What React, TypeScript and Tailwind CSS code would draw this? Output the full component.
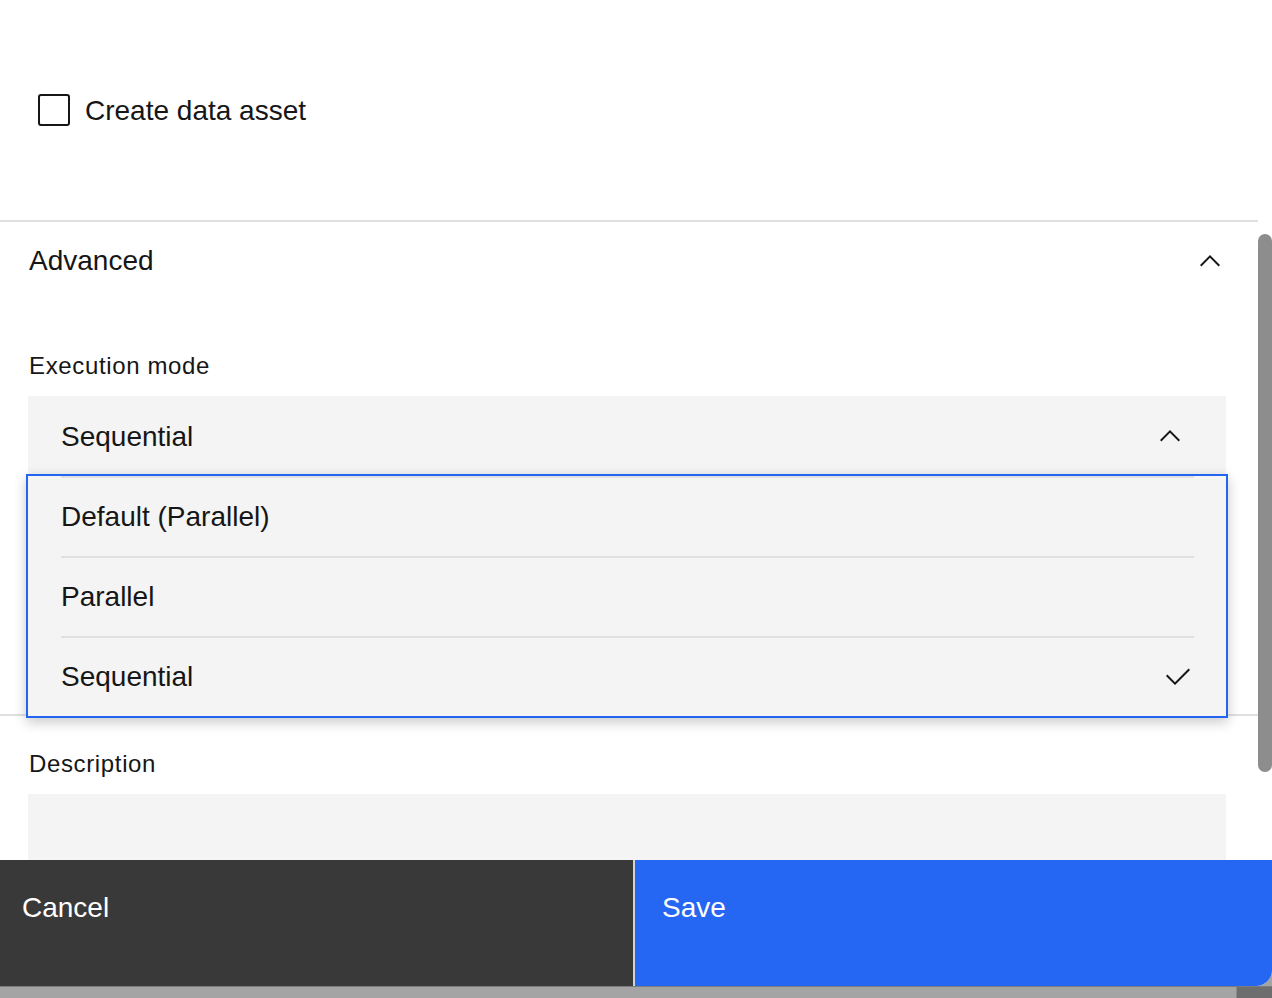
import React from 'react';

const ChevronUp: React.FC<{ className?: string }> = ({ className }) => (
    <svg className={className} viewBox="0 0 32 32" fill="currentColor">
        <path d="M16 10L26 20 24.6 21.4 16 12.8 7.4 21.4 6 20 16 10z" />
    </svg>
);

const Checkmark: React.FC<{ className?: string }> = ({ className }) => (
    <svg className={className} viewBox="0 0 32 32" fill="currentColor">
        <path d="M13 24L4 15 5.414 13.586 13 21.171 26.586 7.586 28 9 13 24z" />
    </svg>
);

const options = ['Default (Parallel)', 'Parallel', 'Sequential'];

const App: React.FC = () => {
    const selected = 'Sequential';

    return (
        <div className="w-[1272px] h-[998px] overflow-hidden bg-[#a4a4a4] text-[#161616] font-['Liberation_Sans',Arial,sans-serif]">
            <div className="h-[986px] flex flex-col bg-white rounded-br-[16px] overflow-hidden">
                <div className="flex flex-1 min-h-0">
                    {/* Main column */}
                    <div className="w-[1258px] flex flex-col">
                        <div className="h-[220px] pt-[94px] pl-[38px]">
                            <label className="flex items-start gap-[15px]">
                                <span className="w-[32px] h-[32px] border-2 border-[#161616] rounded-[3px]" />
                                <span className="text-[28px] leading-[32px] mt-[1px]">Create data asset</span>
                            </label>
                        </div>

                        {/* Accordion */}
                        <div className="border-t-2 border-b-2 border-[#e0e0e0]">
                            <div className="h-[78px] flex items-center justify-between pl-[29px] pr-[32px]">
                                <span className="text-[28px] leading-[36px]">Advanced</span>
                                <ChevronUp className="w-[32px] h-[32px]" />
                            </div>
                            <div className="pl-[28px] pr-[32px] pt-[50px] pb-[240px]">
                                <div className="pl-[1px] text-[24px] leading-[32px] tracking-[0.64px] mb-[14px]">Execution mode</div>
                                <div className="relative">
                                    <div className="h-[78px] bg-[#f4f4f4] flex items-center justify-between pl-[33px] pr-[40px]">
                                        <span className="text-[28px] leading-[36px] pt-[3px]">{selected}</span>
                                        <ChevronUp className="w-[32px] h-[32px] mt-[2px]" />
                                    </div>
                                    <div className="absolute top-full left-[-2px] right-[-2px] z-10 border-2 border-[#2464f2] bg-[#f4f4f4] shadow-[0_4px_12px_rgba(0,0,0,0.22)]">
                                        {options.map((opt) => (
                                            <div key={opt} className="pl-[33px] pr-[32px]">
                                                <div className="h-[80px] border-t-2 border-[#e0e0e0] flex items-center justify-between">
                                                    <span className="text-[28px] leading-[36px]">{opt}</span>
                                                    {opt === selected && <Checkmark className="w-[32px] h-[32px]" />}
                                                </div>
                                            </div>
                                        ))}
                                    </div>
                                </div>
                            </div>
                        </div>

                        <div className="flex-1 min-h-0 flex flex-col pl-[28px] pr-[32px] pt-[32px]">
                            <div className="pl-[1px] text-[24px] leading-[32px] tracking-[0.64px] mb-[14px]">Description</div>
                            <div className="flex-1 bg-[#f4f4f4]" />
                        </div>
                    </div>

                    {/* Scrollbar */}
                    <div className="w-[14px] pt-[234px]">
                        <div className="h-[538px] rounded-full bg-[#8d8d8d]" />
                    </div>
                </div>

                {/* Footer buttons */}
                <div className="h-[126px] flex bg-[#d4d4d4] gap-[2px]">
                    <button className="w-[633px] bg-[#393939] text-white text-left pl-[22px] pt-[30px] flex items-start">
                        <span className="text-[28px] leading-[36px]">Cancel</span>
                    </button>
                    <button className="flex-1 bg-[#2566f2] text-white text-left pl-[27px] pt-[30px] flex items-start">
                        <span className="text-[28px] leading-[36px]">Save</span>
                    </button>
                </div>
            </div>
            <div className="h-[12px] flex border-t border-[#7c7c7c]">
                <div className="flex-1" />
                <div className="w-[36px] bg-[#6e6e6e] border-l border-[#8a8a8a]" />
            </div>
        </div>
    );
};

export default App;
